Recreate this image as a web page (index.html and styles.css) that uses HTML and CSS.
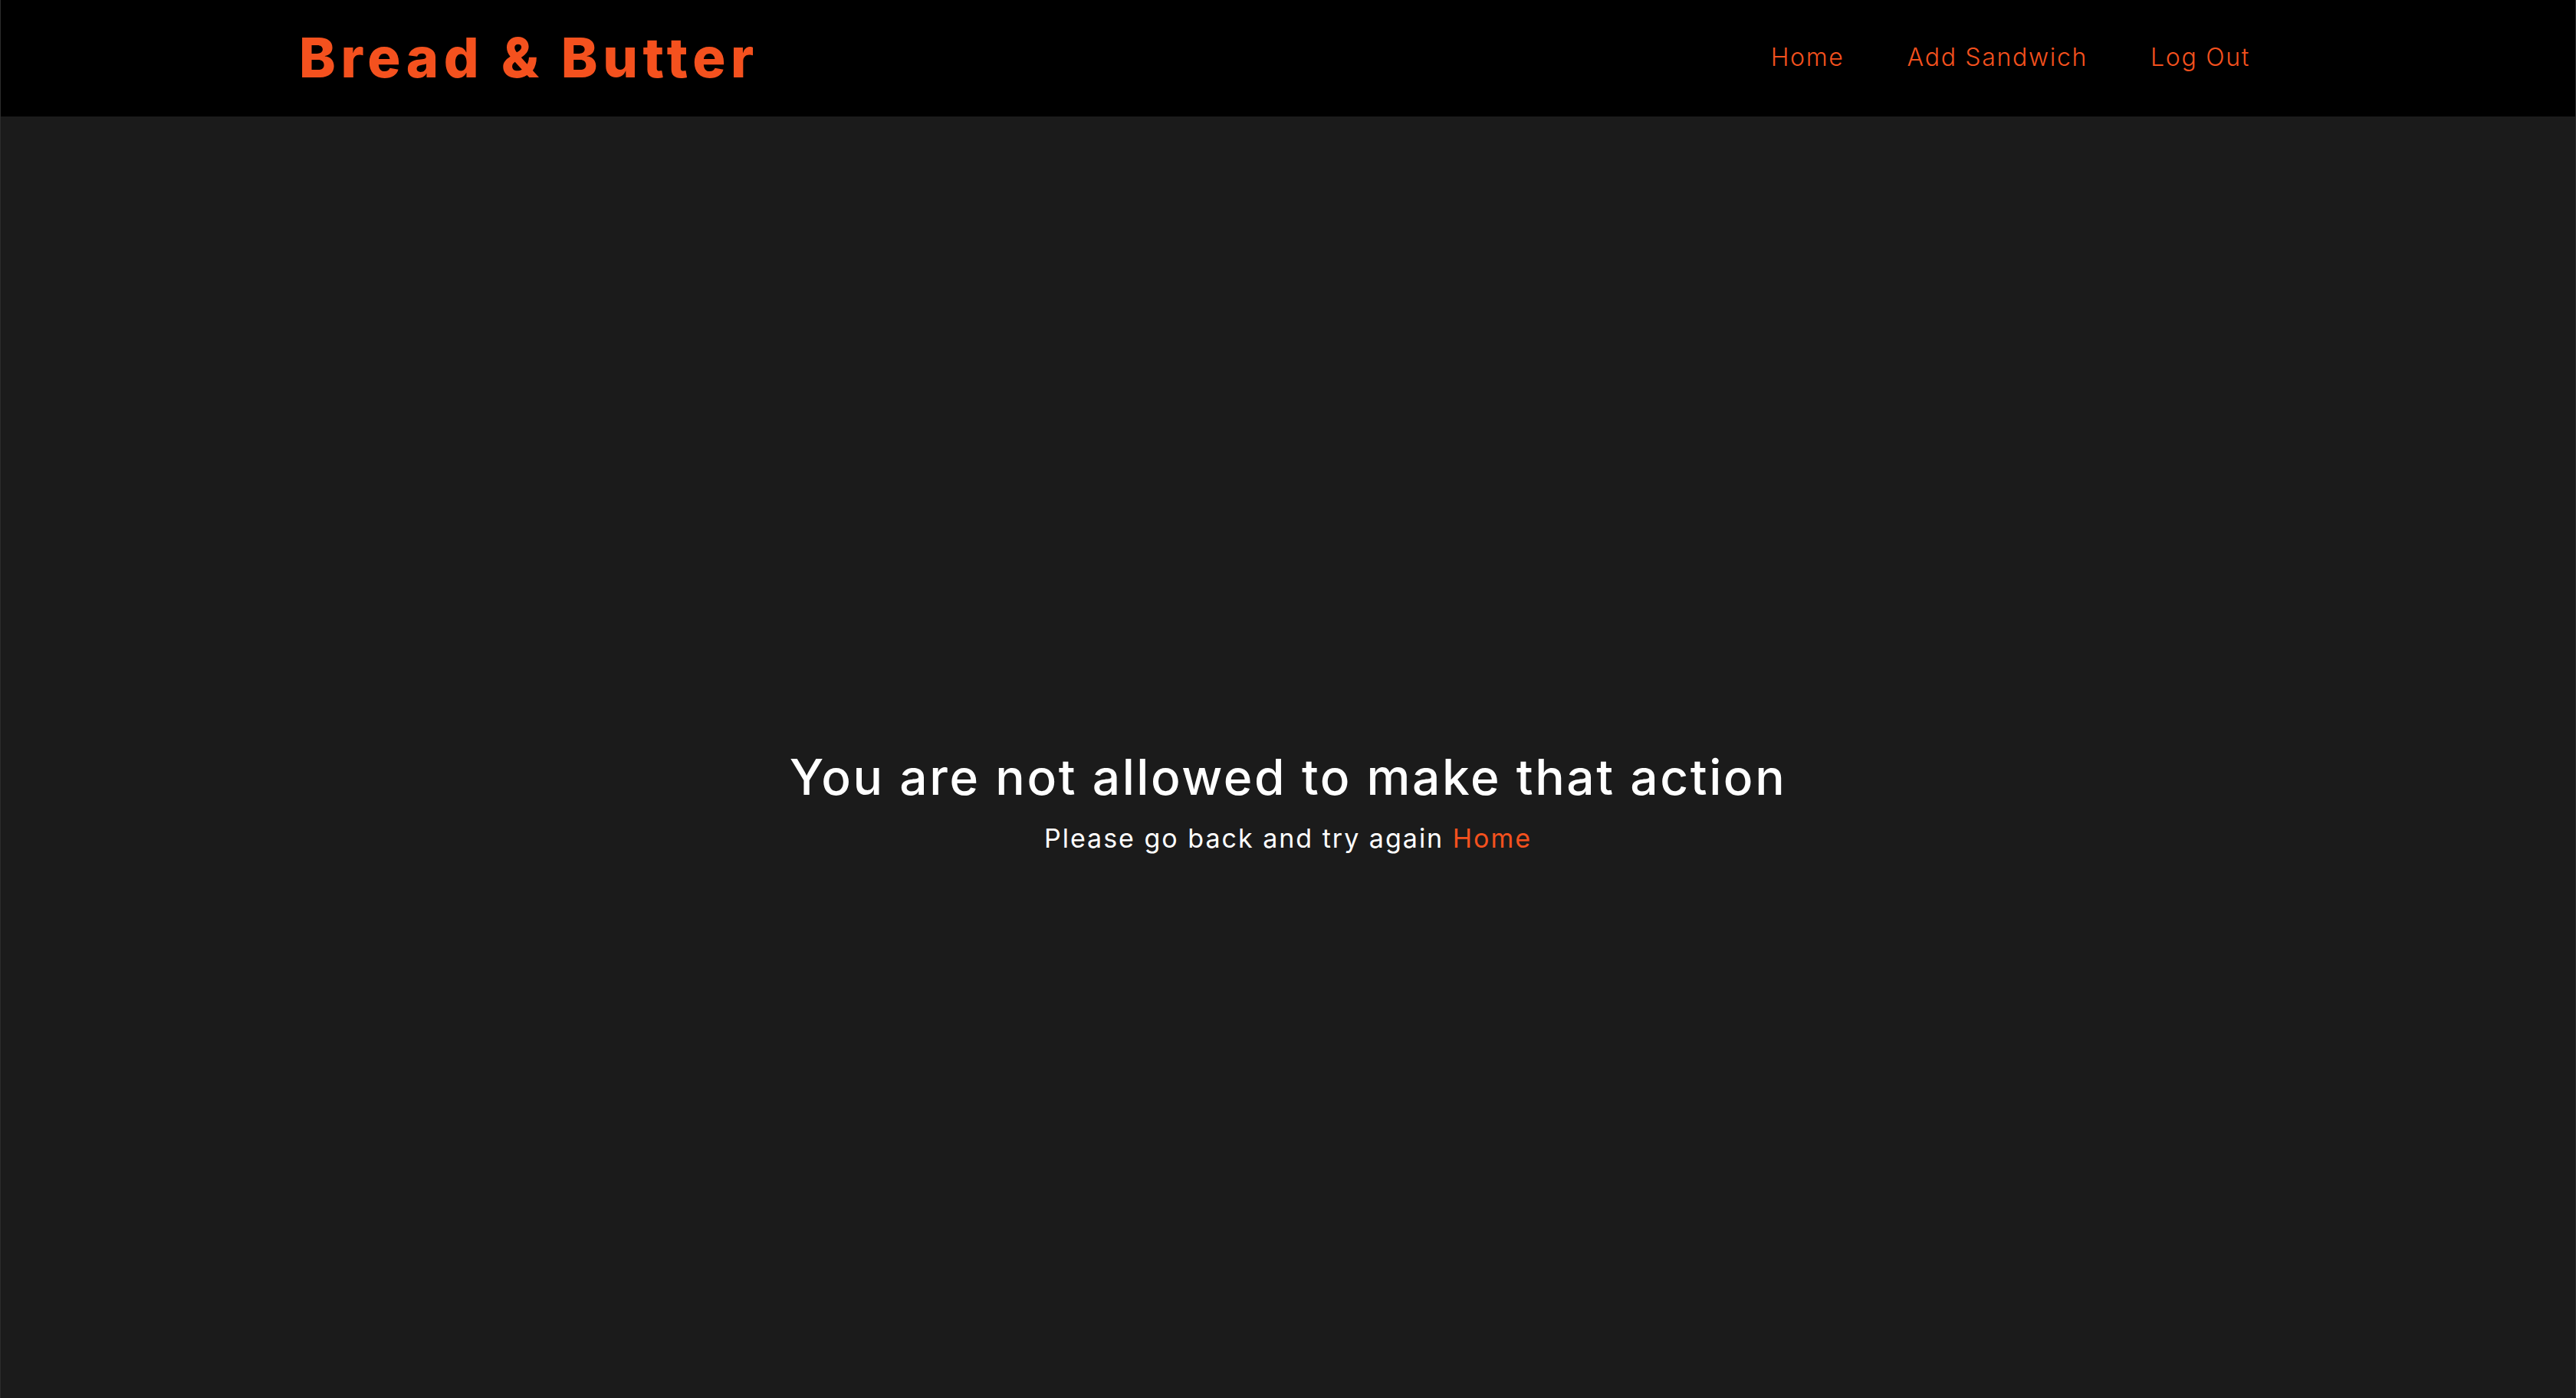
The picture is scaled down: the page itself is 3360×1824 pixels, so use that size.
FILE: index.html
```html
<!DOCTYPE html>
<html lang="en">
<head>
<meta charset="utf-8">
<title>Bread &amp; Butter</title>
<link rel="stylesheet" href="styles.css">
</head>
<body>
<div class="frame">
  <header class="site-header">
    <div class="container header-inner">
      <a class="logo" href="#">Bread &amp; Butter</a>
      <nav class="nav">
        <a class="nav-link" href="#">Home</a>
        <a class="nav-link" href="#">Add Sandwich</a>
        <a class="nav-link" href="#">Log Out</a>
      </nav>
    </div>
  </header>
  <main class="main">
    <h1 class="title">You are not allowed to make that action</h1>
    <p class="message">Please go back and try again <a class="link" href="#">Home</a></p>
  </main>
</div>
</body>
</html>
```

FILE: styles.css
```css
* { box-sizing: border-box; }
html, body {
  margin: 0;
  padding: 0;
  background: #1b1b1b;
}
body {
  font-family: Inter, "Liberation Sans", sans-serif;
  color: #ffffff;
}
.frame {
  min-height: 1824px;
  display: flex;
  flex-direction: column;
  border-left: 1px solid #2c2c2c;
  border-right: 1px solid #2c2c2c;
}
.site-header {
  background: #000000;
  height: 152px;
  display: flex;
  align-items: center;
}
.container {
  width: 2584px;
  margin: 0 auto;
}
.header-inner {
  display: flex;
  justify-content: space-between;
  align-items: center;
}
.logo {
  color: #f4511e;
  font-weight: 800;
  font-size: 72px;
  text-decoration: none;
  letter-spacing: 6.6px;
  margin-left: 2px;
  margin-bottom: 4px;
}
.nav {
  display: flex;
  margin-bottom: 4px;
  margin-right: -4px;
}
.nav-link {
  color: #f4511e;
  font-size: 32px;
  font-weight: 300;
  letter-spacing: 1.7px;
  text-decoration: none;
  padding: 0 41px;
}
.main {
  flex: 1;
  display: flex;
  flex-direction: column;
  align-items: center;
  justify-content: center;
  padding-top: 112px;
}
.title {
  margin: 0;
  font-size: 64px;
  font-weight: 500;
  line-height: 78px;
  letter-spacing: 2.6px;
}
.message {
  margin: 20px 0 0;
  font-size: 34px;
  line-height: 41px;
  letter-spacing: 2px;
}
.link {
  color: #f4511e;
  text-decoration: none;
}
```
